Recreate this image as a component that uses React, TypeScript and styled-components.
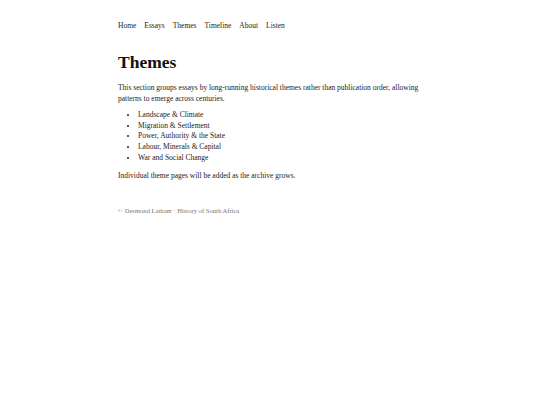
import styled, { createGlobalStyle } from "styled-components";

const GlobalStyle = createGlobalStyle`
  html, body {
    margin: 0;
    padding: 0;
    background: #fff;
  }
  body {
    font-family: "Liberation Serif", Georgia, serif;
    color: #222;
  }
`;

const themes = [
  "Landscape & Climate",
  "Migration & Settlement",
  "Power, Authority & the State",
  "Labour, Minerals & Capital",
  "War and Social Change",
];

const navItems = ["Home", "Essays", "Themes", "Timeline", "About", "Listen"];

export default function App() {
  return (
    <>
      <GlobalStyle />
      <Page>
        <Nav>
          {navItems.map((item) => (
            <NavLink key={item} href="#">
              {item}
            </NavLink>
          ))}
        </Nav>
        <Main>
          <Title>Themes</Title>
          <Para>
            This section groups essays by long-running historical themes rather
            than publication order, allowing patterns to emerge across
            centuries.
          </Para>
          <List>
            {themes.map((t) => (
              <Item key={t}>{t}</Item>
            ))}
          </List>
          <Para>Individual theme pages will be added as the archive grows.</Para>
        </Main>
        <Footer>© Desmond Latham · History of South Africa</Footer>
      </Page>
    </>
  );
}

const Page = styled.div`
  width: 304px;
  margin: 0 auto;
  padding-top: 21px;
`;

const Nav = styled.nav`
  display: flex;
  gap: 8px;
  font-size: 7.5px;
  line-height: 10px;
`;

const NavLink = styled.a`
  color: #222;
  text-decoration: none;
`;

const Main = styled.main`
  padding-top: 21px;
`;

const Title = styled.h1`
  font-size: 17.5px;
  font-weight: 700;
  margin: 0 0 10px;
  line-height: 20px;
  color: #111;
`;

const Para = styled.p`
  font-size: 7.5px;
  line-height: 11px;
  margin: 0 0 6px;
`;

const List = styled.ul`
  margin: 0 0 6px;
  padding-left: 20px;
  font-size: 7.5px;
  line-height: 10.7px;
`;

const Item = styled.li``;

const Footer = styled.footer`
  margin-top: 26px;
  font-size: 6.6px;
  color: #777;
`;
